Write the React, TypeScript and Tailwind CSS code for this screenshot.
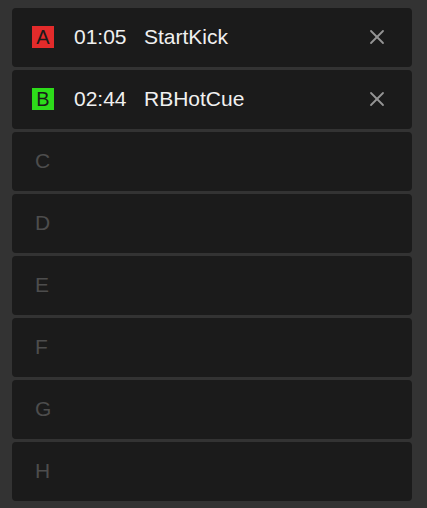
import { X } from "lucide-react";

type Cue = { label: string; color?: string; time?: string; name?: string };

const cues: Cue[] = [
  { label: "A", color: "bg-[#e32b2b]", time: "01:05", name: "StartKick" },
  { label: "B", color: "bg-[#2ddc1a]", time: "02:44", name: "RBHotCue" },
  { label: "C" },
  { label: "D" },
  { label: "E" },
  { label: "F" },
  { label: "G" },
  { label: "H" },
];

function CueRow({ cue }: { cue: Cue }) {
  if (!cue.time) {
    return (
      <div className="flex h-[59px] items-center rounded bg-[#1b1b1b] pb-[2px] pl-[23px]">
        <span className="text-[21px] text-[#4d4d4d]">{cue.label}</span>
      </div>
    );
  }
  return (
    <div className="flex h-[59px] items-center rounded bg-[#1b1b1b] pb-[2px] pl-[20px] pr-[23px]">
      <span
        className={`${cue.color} flex size-[22px] items-center justify-center text-[20px] leading-none text-[#1a1a1a]`}
      >
        {cue.label}
      </span>
      <span className="ml-[20px] w-[70px] text-[21px] text-[#f0f0f0]">{cue.time}</span>
      <span className="flex-1 text-[21px] text-[#f0f0f0]">{cue.name}</span>
      <X size={24} strokeWidth={1.8} className="text-[#959595]" />
    </div>
  );
}

export default function App() {
  return (
    <div
      className="min-h-[508px] bg-[#333333] pt-[8px] pl-[12px]"
      style={{ fontFamily: '"Liberation Sans", Arial, sans-serif' }}
    >
      <div className="flex w-[400px] flex-col gap-[3px]">
        {cues.map((c) => (
          <CueRow key={c.label} cue={c} />
        ))}
      </div>
    </div>
  );
}
